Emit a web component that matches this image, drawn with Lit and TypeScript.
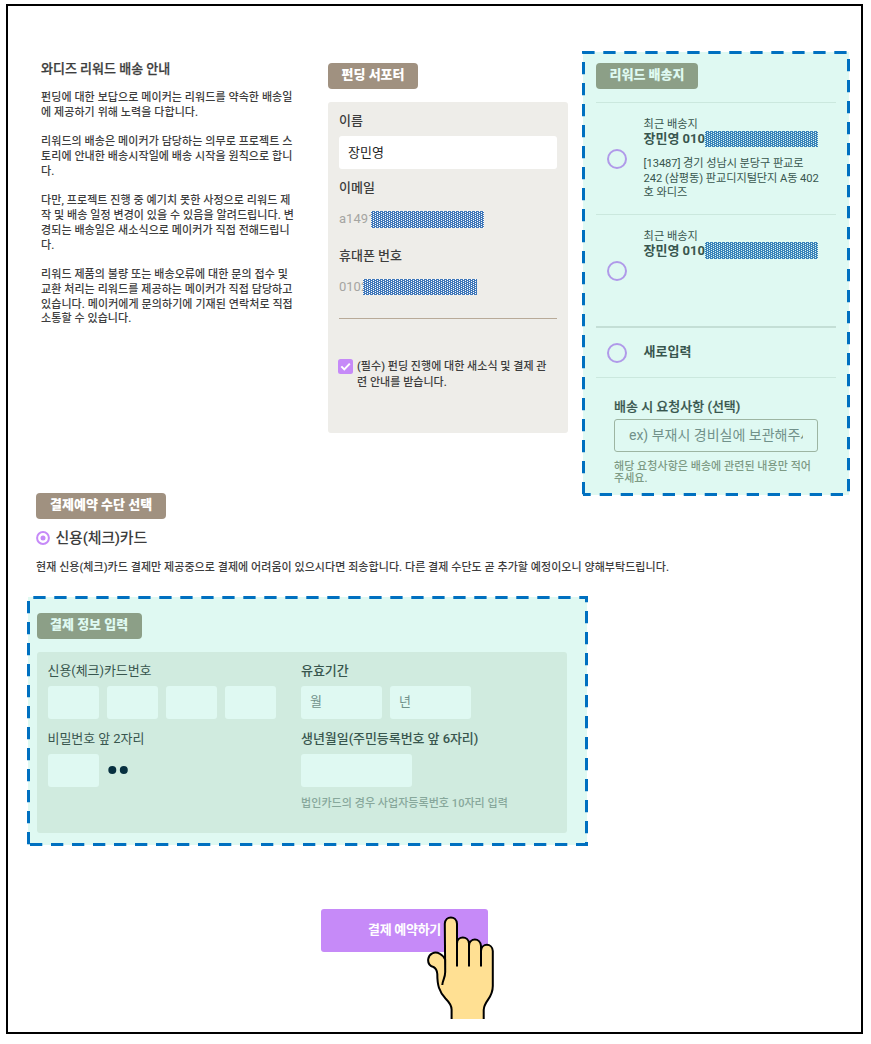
import { LitElement, html, css, svg } from "lit";
import { customElement } from "lit/decorators.js";

type Seg = [number, number, number, number, number];

// Each segment: x1, y1, x2, y2, dash offset
const dashes = (segs: Seg[]) => segs.map(([x1, y1, x2, y2, o]) => svg`
  <line x1=${x1} y1=${y1} x2=${x2} y2=${y2} stroke="#0070c0" stroke-width="3"
    stroke-dasharray="12.3 8.7" stroke-dashoffset=${o}></line>`);

@customElement("app-root")
export class AppRoot extends LitElement {
  static styles = css`
    :host { display: block; width: 871px; height: 1044px; background: #fff; overflow: hidden;
      font-family: Roboto, "Noto Sans CJK KR", sans-serif; color: #3d3d3d; }
    * { box-sizing: border-box; }
    p, h2, h3 { margin: 0; font-weight: 500; white-space: nowrap; }
    .frame { width: 857px; height: 1030px; margin: 4px 0 0 6px; border: 2px solid #000; display: flow-root; }
    .top { display: flex; align-items: flex-start; margin: 45px 0 0 33px; height: 445px; }
    .intro { width: 287px; padding-top: 8px; }
    .intro h2 { font-size: 13px; line-height: 20px; margin-bottom: 12px; -webkit-text-stroke: .25px currentColor; }
    .intro p { font-size: 11px; line-height: 14.77px; margin-bottom: 14.77px; letter-spacing: .08px; }
    .badge { display: block; width: fit-content; height: 26px; line-height: 24px; border-radius: 4px; background: #a09180;
      color: #fff; font-weight: 900; font-size: 13px; padding: 0 13.5px; white-space: nowrap; }
    .tint .badge { background: #8c9f87; color: #dffaf2; }
    .supporter { width: 240px; margin-right: 14px; padding-top: 12px; }
    .card { margin-top: 13px; height: 331px; border-radius: 3px; background: #eeede9; padding: 9px 11px 0; }
    .label { font-size: 13px; line-height: 20px; height: 20px; }
    .field { height: 33px; border-radius: 3px; background: #fff; font-size: 13px; line-height: 32px; padding-left: 9px; }
    .card .field { margin: 5px 0 9px; color: #222; font-weight: 400; font-family: "Noto Sans CJK KR", sans-serif; font-size: 13px; line-height: 31px; }
    .masked { display: flex; align-items: center; height: 20px; font-size: 13px; color: #a5a5a2; margin: 11px 0 17px; line-height: 20px; }
    .masked span { overflow: hidden; }
    .mosaic { height: 17px; width: 113px; flex: none; display: block; }
    .mail { width: 32px; } .phone { width: 24px; }
    .rule { border-top: 1px solid #b8aa98; margin-top: 21px; }
    .agree { display: flex; margin-top: 40px; gap: 4px; font-size: 11px; line-height: 16px; letter-spacing: .03px; }
    .agree svg { flex: none; margin: 0 0 0 -1px; }
    .tint { position: relative; background: linear-gradient(#dff9f2, #dff9f2) 1px 1px / calc(100% - 2px) calc(100% - 2px) no-repeat; color: #38564e; }
    .dash { position: absolute; inset: 0; pointer-events: none; }
    .address { width: 268px; height: 445px; padding: 12px 14px 0; }
    .address .badge { margin-bottom: 13px; }
    .option { display: grid; grid-template-columns: 47.6px 1fr; border-top: 1px solid #cbe8de; height: 112px; align-items: start; }
    .option.strong { border-top: 2px solid #c4dfd6; height: 51px; }
    .ring { width: 20px; height: 20px; border: 2px solid #b09ae9; border-radius: 50%; margin: 46px 0 0 11px; }
    .strong .ring { margin-top: 15px; }
    .who { padding-top: 14px; font-size: 11px; }
    .who p { line-height: 15px; font-weight: 400; font-size: 11.2px; }
    .who .name { display: flex; align-items: center; font-size: 13px; font-weight: 700; height: 15px; margin-top: -1px; letter-spacing: -.04px; }
    .who .lines { margin-top: 11px; line-height: 14.6px; letter-spacing: -.08px; }
    .name .mosaic { margin-right: -20px; }
    .fresh { font-size: 13px; font-weight: 700; line-height: 20px; margin-top: 14px; }
    .request { border-top: 1px solid #cbe8de; padding: 19px 18px 0; }
    .request .label { -webkit-text-stroke: .2px currentColor; }
    .request .box { width: 204px; height: 33px; border: 1px solid #9db5a2; border-radius: 3px; margin: 2px 0 9px;
      padding: 0 14px; font-size: 14px; line-height: 31px; color: #71918a; white-space: nowrap; overflow: hidden; }
    .box span { display: block; overflow: hidden; }
    .request .help { font-size: 11px; line-height: 11.5px; color: #7d9a84; letter-spacing: .05px; }
    .method { margin: -3.5px 0 0 28px; }
    .method .badge { padding: 0 14px; }
    .credit { display: flex; align-items: center; gap: 5.5px; font-size: 15px; line-height: 22px; margin-top: 8.5px; height: 22px; letter-spacing: -.22px; }
    .notice { font-size: 11px; line-height: 16px; margin-top: 11px; letter-spacing: .055px; }
    .pay { width: 561px; height: 250px; margin: 20px 0 0 19px; padding: 17px 21px 0 9.5px; }
    .panel { height: 181px; margin-top: 13px; border-radius: 3px; background: #d0ebdf; padding: 9px 11px;
      display: grid; grid-template-columns: 253.6px 1fr; align-content: start; width: 530px; }
    .panel .label { font-weight: 400; letter-spacing: -.07px; }
    .panel .right { font-weight: 500; }
    .inputs { display: flex; gap: 7.7px; margin: 5px 0 9.5px; align-items: center; }
    .inputs .field { background: #dff9f2; color: #71918a; width: 51.4px; font-weight: 400; }
    .inputs .wide { width: 81.3px; }
    .inputs .birth { width: 110.5px; }
    .dots { margin-left: 1px; }
    .corp { font-size: 11px; line-height: 16px; color: #87a79b; letter-spacing: .05px; }
    .submit { position: relative; width: 167px; height: 42.5px; margin: 63px 0 0 313px; border-radius: 3px; background: #c68af8;
      color: #fff; font-weight: 700; font-size: 13px; line-height: 41px; padding-left: 47px; white-space: nowrap; letter-spacing: -.28px; }
    .hand { position: absolute; left: 98.6px; top: -3.5px; }
  `;

  private mosaic(bg: string, fg: string, id: string, w: number, h = 17) {
    return html`<svg class="mosaic" width=${w} height=${h} style="width:${w}px;height:${h}px" shape-rendering="crispEdges">
      <defs><pattern id=${id} width="4" height="2" patternUnits="userSpaceOnUse">
        <rect width="4" height="2" fill=${bg}></rect>
        <rect width="1" height="1" fill=${fg}></rect><rect x="2" y="1" width="1" height="1" fill=${fg}></rect>
      </pattern></defs><rect width=${w} height=${h} fill="url(#${id})"></rect></svg>`;
  }

  render() {
    return html`<main class="frame">
      <div class="top">
        <section class="intro">
          <h2>와디즈 리워드 배송 안내</h2>
          <p>펀딩에 대한 보답으로 메이커는 리워드를 약속한 배송일<br>에 제공하기 위해 노력을 다합니다.</p>
          <p>리워드의 배송은 메이커가 담당하는 의무로 프로젝트 스<br>토리에 안내한 배송시작일에 배송 시작을 원칙으로 합니<br>다.</p>
          <p>다만, 프로젝트 진행 중 예기치 못한 사정으로 리워드 제<br>작 및 배송 일정 변경이 있을 수 있음을 알려드립니다. 변<br>경되는 배송일은 새소식으로 메이커가 직접 전해드립니<br>다.</p>
          <p>리워드 제품의 불량 또는 배송오류에 대한 문의 접수 및<br>교환 처리는 리워드를 제공하는 메이커가 직접 담당하고<br>있습니다. 메이커에게 문의하기에 기재된 연락처로 직접<br>소통할 수 있습니다.</p>
        </section>
        <section class="supporter">
          <span class="badge">펀딩 서포터</span>
          <div class="card">
            <p class="label">이름</p>
            <div class="field">장민영</div>
            <p class="label">이메일</p>
            <div class="masked"><span class="mail">a1491</span>${this.mosaic("#3f77b9", "#ffffff", "m1", 113)}</div>
            <p class="label">휴대폰 번호</p>
            <div class="masked"><span class="phone">0102</span>${this.mosaic("#3f77b9", "#ffffff", "m2", 114, 16)}</div>
            <div class="rule"></div>
            <div class="agree">
              <svg width="15" height="15" viewBox="0 0 15 15"><rect width="15" height="15" rx="2.5" fill="#c68af8"></rect><path d="M3.3 7.4 6.3 10.4 11.8 4.6" fill="none" stroke="#fff" stroke-width="2"></path></svg>
              <p>(필수) 펀딩 진행에 대한 새소식 및 결제 관<br>련 안내를 받습니다.</p>
            </div>
          </div>
        </section>
        <section class="tint address">
          <span class="badge">리워드 배송지</span>
          <div class="option"><i class="ring"></i><div class="who">
            <p>최근 배송지</p><p class="name">장민영 010${this.mosaic("#3882ba", "#dff9f2", "m3", 113, 16)}</p>
            <p class="lines">[13487] 경기 성남시 분당구 판교로<br>242 (삼평동) 판교디지털단지 A동 402<br>호 와디즈</p></div></div>
          <div class="option"><i class="ring"></i><div class="who">
            <p>최근 배송지</p><p class="name">장민영 010${this.mosaic("#3882ba", "#dff9f2", "m4", 113)}</p></div></div>
          <div class="option strong"><i class="ring"></i><p class="fresh">새로입력</p></div>
          <div class="request">
            <p class="label">배송 시 요청사항 (선택)</p>
            <div class="box"><span>ex) 부재시 경비실에 보관해주세요</span></div>
            <p class="help">해당 요청사항은 배송에 관련된 내용만 적어<br>주세요.</p>
          </div>
          <svg class="dash" width="268" height="445">${dashes([
            [0.3, 1.5, 268, 1.5, 0], [266.5, 8, 266.5, 443, 0],
            [17.7, 443.5, 268, 443.5, 0], [1, 443.5, 8.7, 443.5, 0], [1.5, 11, 1.5, 445, 0], [1.5, 0, 1.5, 2.5, 0]])}</svg>
        </section>
      </div>
      <section class="method">
        <span class="badge">결제예약 수단 선택</span>
        <div class="credit">
          <svg width="14" height="14" viewBox="0 0 14 14"><circle cx="7" cy="7" r="5.9" fill="none" stroke="#c68af8" stroke-width="2"></circle><circle cx="7" cy="7" r="2.5" fill="#c68af8"></circle></svg>
          <p>신용(체크)카드</p>
        </div>
        <p class="notice">현재 신용(체크)카드 결제만 제공중으로 결제에 어려움이 있으시다면 죄송합니다. 다른 결제 수단도 곧 추가할 예정이오니 양해부탁드립니다.</p>
      </section>
      <section class="tint pay">
        <span class="badge">결제 정보 입력</span>
        <div class="panel">
          <div><p class="label">신용(체크)카드번호</p>
            <div class="inputs"><div class="field"></div><div class="field"></div><div class="field"></div><div class="field"></div></div></div>
          <div><p class="label right">유효기간</p>
            <div class="inputs"><div class="field wide">월</div><div class="field wide">년</div></div></div>
          <div><p class="label">비밀번호 앞 2자리</p>
            <div class="inputs"><div class="field"></div><svg class="dots" width="22" height="10"><circle cx="4.3" cy="5" r="4" fill="#073040"></circle><circle cx="15.8" cy="5" r="4" fill="#073040"></circle></svg></div></div>
          <div><p class="label right">생년월일(주민등록번호 앞 6자리)</p>
            <div class="inputs"><div class="field birth"></div></div>
            <p class="corp">법인카드의 경우 사업자등록번호 10자리 입력</p></div>
        </div>
        <svg class="dash" width="561" height="250">${dashes([
          [6.3, 1.5, 561, 1.5, 0], [559.5, 0, 559.5, 250, 6],
          [3, 248.5, 561, 248.5, 0], [1.5, 5, 1.5, 250, 0]])}</svg>
      </section>
      <div class="submit">결제 예약하기
        <svg class="hand" width="84" height="120" viewBox="0 0 84 120">
          <path d="M31.6 113V103.5C31.6 99 29 96 25.5 92.5C19 85.5 17.3 79 17.3 68C17 64.5 16.5 62.5 13.5 61C9.5 60 7.8 57 8.2 53.2C9 47.5 14.5 45 20 47.8C22.5 49 24 51 25.2 53.5L24.8 17.8C25.3 9.3 36.5 9.3 37 17.8V37.5C37 29.5 48.5 29.5 49 37.5V40C49.2 31.3 60.5 31.3 61 40V45C61.5 36.8 72.3 36.8 72.8 45V80C72.8 93 64.3 94 63.7 104V113Z" fill="#ffe093"></path>
          <path d="M31.6 113V103.5C31.6 99 29 96 25.5 92.5C19 85.5 17.3 79 17.3 68C17 64.5 16.5 62.5 13.5 61C9.5 60 7.8 57 8.2 53.2C9 47.5 14.5 45 20 47.8C22.5 49 24 51 25.2 53.5V66C25.2 72 22.5 74 22.3 79M25.2 66L24.8 17.8C25.3 9.3 36.5 9.3 37 17.8V60.5M37 37.5C37 29.5 48.5 29.5 49 37.5V60.5M49 40C49.2 31.3 60.5 31.3 61 40V60.5M61 45C61.5 36.8 72.3 36.8 72.8 45V80C72.8 93 64.3 94 63.7 104V113" fill="none" stroke="#000" stroke-width="2"></path>
        </svg>
      </div>
    </main>`;
  }
}
